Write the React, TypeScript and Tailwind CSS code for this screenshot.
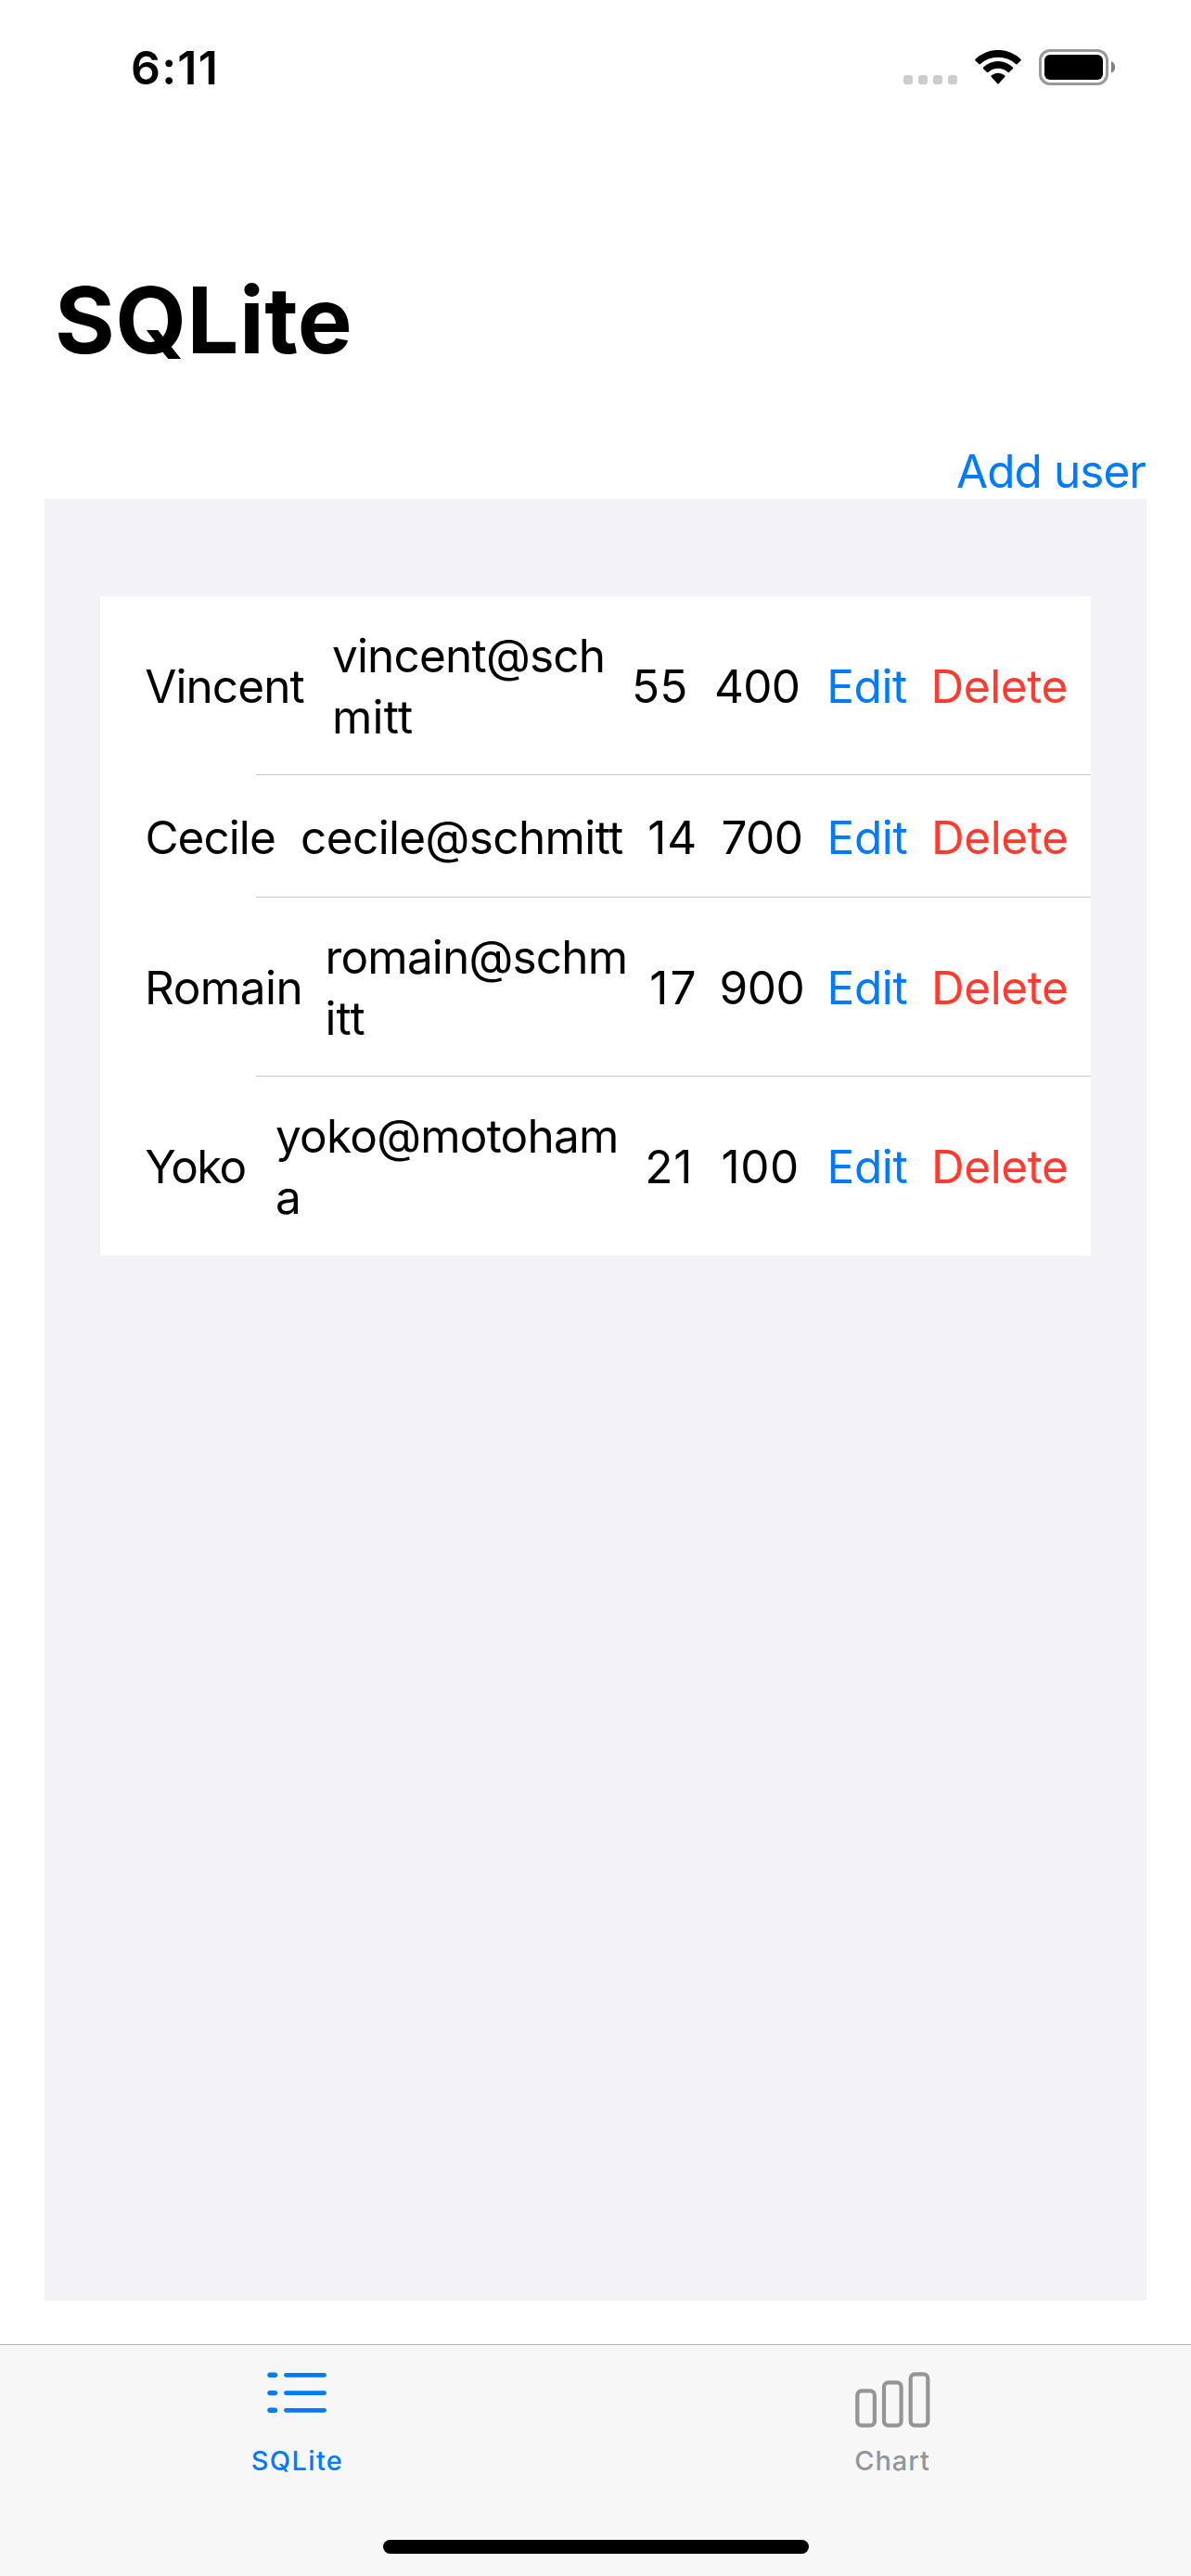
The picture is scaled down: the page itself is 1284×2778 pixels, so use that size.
import React from "react";

type Cell = { lines: { text: string; spacing: string }[] };

type User = {
  columns: string;
  height: string;
  cells: Cell[];
};

const one = (text: string, spacing: string): Cell => ({ lines: [{ text, spacing }] });

const users: User[] = [
  {
    columns: "grid-cols-[201.7px_323px_89px_121.3px_112.4px_1fr] pl-[48.2px]",
    height: "h-[192px] pt-0.5",
    cells: [
      one("Vincent", "tracking-[-0.9px]"),
      {
        lines: [
          { text: "vincent@sch", spacing: "tracking-[-0.8px]" },
          { text: "mitt", spacing: "tracking-[0.3px]" },
        ],
      },
      one("55", "tracking-[0.31px]"),
      one("400", "tracking-[-0.7px]"),
    ],
  },
  {
    columns: "grid-cols-[167.7px_374.2px_79.2px_114.1px_112.4px_1fr] pl-[48.4px]",
    height: "h-[131px] pt-[3px]",
    cells: [
      one("Cecile", "tracking-[-0.95px]"),
      one("cecile@schmitt", "tracking-[-0.62px]"),
      one("14", "tracking-[0.87px]"),
      one("700", "tracking-[-0.63px]"),
    ],
  },
  {
    columns: "grid-cols-[194.5px_349.7px_75.4px_116px_112.4px_1fr] pl-[48px]",
    height: "h-[192px] pt-0.5",
    cells: [
      one("Romain", "tracking-[-0.5px]"),
      {
        lines: [
          { text: "romain@schm", spacing: "tracking-[-0.82px]" },
          { text: "itt", spacing: "tracking-normal" },
        ],
      },
      one("17", "tracking-[2.17px]"),
      one("900", "tracking-[-0.46px]"),
    ],
  },
  {
    columns: "grid-cols-[140.8px_398.3px_82.1px_114.2px_112.4px_1fr] pl-[48.2px]",
    height: "h-[193px] pt-px",
    cells: [
      one("Yoko", "tracking-[-1.7px]"),
      {
        lines: [
          { text: "yoko@motoham", spacing: "tracking-[-0.78px]" },
          { text: "a", spacing: "tracking-normal" },
        ],
      },
      one("21", "tracking-[0.81px]"),
      one("100", "tracking-[0.67px]"),
    ],
  },
];

function StatusBar() {
  return (
    <header className="flex h-[145px] shrink-0 items-start justify-between pt-[48px] pr-[81px] pl-[141px]">
      <span className="text-[50px] leading-[50px] font-semibold tracking-[1.2px]">6:11</span>
      <div className="flex h-[48px] items-start">
        <div className="mt-[33px] flex gap-1.5">
          {[0, 1, 2, 3].map((i) => (
            <span key={i} className="size-[10px] rounded-[3px] bg-[#cccccc]" />
          ))}
        </div>
        <svg className="mt-1.5 ml-[19px] h-[37px] w-[50px]" viewBox="0 0 50 37">
          <path d="M.6 9.7a35.3 35.3 0 0 1 48.8 0c.6.6.6 1.2 0 1.8l-3.6 3.6c-.6.6-1.2.5-1.8 0a28 28 0 0 0-38 0c-.6.5-1.2.6-1.8 0L.6 11.5c-.6-.6-.6-1.2 0-1.8Z" />
          <path d="M9.2 18.4a23 23 0 0 1 31.6 0c.6.6.6 1.2 0 1.8l-3.7 3.6c-.6.6-1.1.5-1.7 0a15.6 15.6 0 0 0-20.8 0c-.6.5-1.1.6-1.7 0l-3.7-3.6c-.6-.6-.6-1.2 0-1.8Z" />
          <path d="M17.9 27.3a10.9 10.9 0 0 1 14.2 0c.7.6.7 1.2.1 1.8l-6.3 6.9c-.6.7-1.2.7-1.8 0l-6.3-6.9c-.6-.6-.6-1.2.1-1.8Z" />
        </svg>
        <svg className="mt-[5px] ml-[19px] h-[39px] w-[83px]" viewBox="0 0 83 39">
          <rect x="1.5" y="1.5" width="72" height="36" rx="10.5" fill="none" stroke="#999999" strokeWidth="3" />
          <rect x="6" y="6" width="63" height="27" rx="6" />
          <path d="M78 13.2c2.6 1 4.2 3.5 4.2 6.3s-1.6 5.3-4.2 6.3Z" fill="#808080" />
        </svg>
      </div>
    </header>
  );
}

function UserRow({ user, last }: { user: User; last: boolean }) {
  return (
    <li>
      <div className={`grid items-center ${user.columns} ${user.height}`}>
        {user.cells.map((cell, i) => (
          <div key={i}>
            {cell.lines.map((line) => (
              <div key={line.text} className={`whitespace-nowrap ${line.spacing}`}>
                {line.text}
              </div>
            ))}
          </div>
        ))}
        <button className="text-left tracking-[-0.4px] text-[#007aff]">Edit</button>
        <button className="text-left tracking-[-0.43px] text-[#ff3b30]">Delete</button>
      </div>
      {!last && <div className="ml-[168px] h-px bg-[#c6c6c8]" />}
    </li>
  );
}

function ListIcon() {
  return (
    <svg className="h-[44px] w-[64px]" viewBox="0 0 64 44" fill="none" stroke="currentColor" strokeLinecap="round">
      {[3.3, 22.6, 41.3].map((y) => (
        <g key={y}>
          <path d={`M3 ${y}H8.4`} strokeWidth="5.4" />
          <path d={`M20.4 ${y}H61.6`} strokeWidth="4.7" />
        </g>
      ))}
    </svg>
  );
}

function ChartIcon() {
  return (
    <svg className="h-[60px] w-[81px]" viewBox="0 0 81 60" fill="none" stroke="currentColor" strokeWidth="4.2">
      <rect x="2.3" y="20.4" width="18.6" height="37.3" rx="4.5" />
      <rect x="31" y="11.3" width="18.6" height="46.4" rx="4.5" />
      <rect x="59.7" y="2.3" width="18.6" height="55.4" rx="4.5" />
    </svg>
  );
}

export default function App() {
  return (
    <div className="flex h-[2778px] w-[1284px] flex-col overflow-hidden bg-white font-['Inter',sans-serif] text-black">
      <StatusBar />
      <h1 className="mt-[140px] ml-[59px] text-[99px] leading-[120px] font-bold tracking-[0.4px]">SQLite</h1>
      <div className="mt-[70px] mr-[46px] flex h-[66px] justify-end">
        <button className="w-[207px] text-left text-[49.5px] leading-[66px] tracking-[-0.95px] whitespace-nowrap text-[#007aff]">
          Add user
        </button>
      </div>
      <main className="mx-[48px] mt-[-3px] h-[1943px] shrink-0 bg-[#f2f2f7] px-[60px] pt-[105px]">
        <ul className="bg-white text-[49.5px] leading-[66px]">
          {users.map((user, i) => (
            <UserRow key={i} user={user} last={i === users.length - 1} />
          ))}
        </ul>
      </main>
      <nav className="mt-[47px] flex flex-1 flex-col border-t border-[#b2b2b2] bg-[#f7f7f7]">
        <div className="grid grid-cols-2">
          <button className="flex h-[155px] flex-col items-center pt-[29px] pr-0.5 text-[#007aff]">
            <ListIcon />
            <span className="mt-[34px] ml-px text-[29px] leading-9 font-medium tracking-[1.34px]">SQLite</span>
          </button>
          <button className="flex h-[155px] flex-col items-center pt-[29px] pr-0.5 text-[#959595]">
            <ChartIcon />
            <span className="mt-[18px] text-[29px] leading-9 font-medium tracking-[0.93px]">Chart</span>
          </button>
        </div>
        <div className="mx-auto mt-[55px] h-[15px] w-[459px] rounded-full bg-black" />
      </nav>
    </div>
  );
}
